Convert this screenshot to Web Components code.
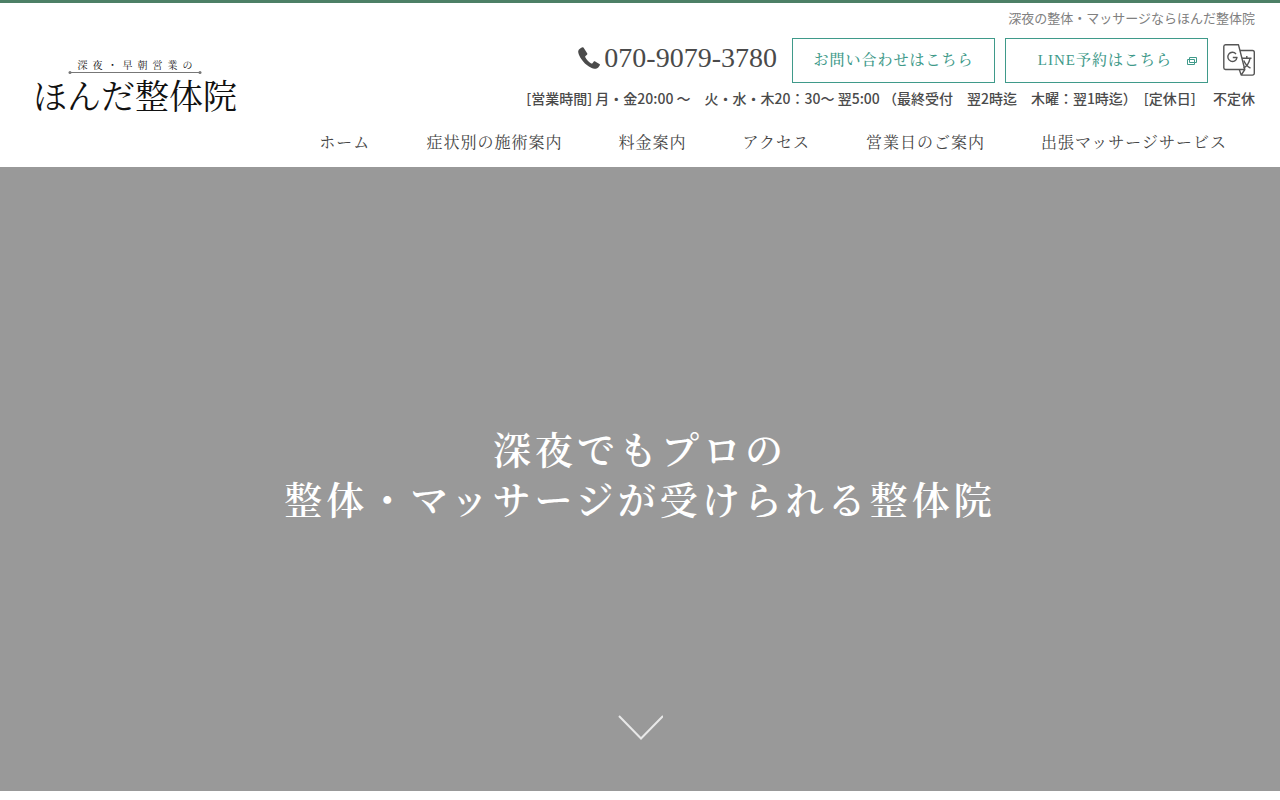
<!DOCTYPE html>
<html lang="ja">
<head>
  <meta charset="utf-8">
  <meta name="viewport" content="width=device-width, initial-scale=1">
  <title>ほんだ整体院</title>
  <style>
    body {
      --green: #4d8066;
      --teal: #3f9a8a;
      --serif: "Liberation Serif", "Noto Serif CJK JP", "Noto Sans CJK JP", serif;
      margin: 0;
      background: #fff;
      color: #4a4a4a;
      font-family: "Noto Sans CJK JP", sans-serif;
    }
  </style>
</head>
<body>
  <site-header>
    <site-logo slot="logo">
      <span slot="lead">深夜・早朝営業の</span>
      ほんだ整体院
    </site-logo>
    <span slot="tagline">深夜の整体・マッサージならほんだ整体院</span>
    <tel-link slot="contact" number="070-9079-3780"></tel-link>
    <outline-button slot="contact" href="#contact">お問い合わせはこちら</outline-button>
    <outline-button slot="contact" href="#line" external>LINE予約はこちら</outline-button>
    <translate-button slot="contact"></translate-button>
    <span slot="hours">[営業時間] 月・金20:00 ～　火・水・木20：30～ 翌5:00 （最終受付　翌2時迄　木曜：翌1時迄）　[定休日]　 不定休</span>
    <nav-item slot="nav" href="#home">ホーム</nav-item>
    <nav-item slot="nav" href="#symptoms">症状別の施術案内</nav-item>
    <nav-item slot="nav" href="#price">料金案内</nav-item>
    <nav-item slot="nav" href="#access">アクセス</nav-item>
    <nav-item slot="nav" href="#calendar">営業日のご案内</nav-item>
    <nav-item slot="nav" href="#visit">出張マッサージサービス</nav-item>
  </site-header>
  <hero-banner>深夜でもプロの<br>整体・マッサージが受けられる整体院</hero-banner>

  <script>
    class SiteHeader extends HTMLElement {
      constructor() {
        super();
        this.attachShadow({ mode: 'open' }).innerHTML = `
          <style>
            :host {
              display: block;
              border-top: 3px solid var(--green);
            }
            header {
              display: flex;
              justify-content: space-between;
              padding: 5px 25px 7px 33px;
            }
            .logo {
              padding-top: 52px;
            }
            .info {
              display: flex;
              flex-direction: column;
              align-items: flex-end;
            }
            .tagline {
              margin: 0;
              color: #808080;
              font-size: 13px;
              line-height: 20px;
            }
            .contact {
              display: flex;
              gap: 10px;
              margin-top: 10px;
            }
            .hours {
              margin: 5px 0 0;
              font-size: 14px;
              font-weight: 500;
              line-height: 20px;
              white-space: nowrap;
            }
            nav {
              display: flex;
              margin-top: 18px;
            }
          </style>
          <header>
            <div class="logo"><slot name="logo"></slot></div>
            <div class="info">
              <p class="tagline"><slot name="tagline"></slot></p>
              <div class="contact"><slot name="contact"></slot></div>
              <p class="hours"><slot name="hours"></slot></p>
              <nav><slot name="nav"></slot></nav>
            </div>
          </header>
        `;
      }
    }

    class SiteLogo extends HTMLElement {
      constructor() {
        super();
        this.attachShadow({ mode: 'open' }).innerHTML = `
          <style>
            :host {
              display: block;
              font-family: var(--serif);
              color: #111;
            }
            a {
              display: flex;
              flex-direction: column;
              align-items: center;
              color: inherit;
              text-decoration: none;
            }
            .lead {
              padding-left: 5px;
              font-size: 10px;
              line-height: 11px;
              letter-spacing: 5px;
            }
            .name {
              font-size: 34px;
              font-weight: 400;
              line-height: 46px;
              white-space: nowrap;
            }
            svg {
              display: block;
            }
          </style>
          <a href="#home">
            <span class="lead"><slot name="lead"></slot></span>
            <svg width="134" height="4" viewBox="0 0 134 4" fill="#777" aria-hidden="true">
              <path d="M2 1h130v1H2z"/>
              <circle cx="2" cy="1.5" r="1.5"/>
              <circle cx="132" cy="1.5" r="1.5"/>
            </svg>
            <span class="name"><slot></slot></span>
          </a>
        `;
      }
    }

    class TelLink extends HTMLElement {
      constructor() {
        super();
        const number = this.getAttribute('number');
        this.attachShadow({ mode: 'open' }).innerHTML = `
          <style>
            :host {
              display: block;
              margin-right: 5px;
            }
            a {
              display: flex;
              align-items: center;
              gap: 4px;
              color: #4a4a4a;
              font-family: var(--serif);
              font-size: 28px;
              line-height: 40px;
              text-decoration: none;
            }
          </style>
          <a href="tel:${number}">
            <svg width="22" height="22" viewBox="0 0 22 22" fill="currentColor" aria-hidden="true">
              <path d="M4.6.3C3 .8.4 2.3.2 4.2c-.3 3.200 3.200 9 6.700 12.200 3.500 3.200 8.200 5.700 11 5.400 1.800-.2 3.200-2.100 3.900-3.500.3-.6.100-1-.4-1.300l-4.200-2.600c-.5-.3-1-.2-1.400.2l-1.300 1.600c-.4.400-.8.500-1.300.2-2.400-1.300-4.700-3.700-5.900-6.200-.2-.4-.1-.8.200-1.100l1.500-1.400c.4-.4.5-.8.300-1.300L5.800.9C5.600.4 5.100.1 4.600.3z"/>
            </svg>
            <span>${number}</span>
          </a>
        `;
      }
    }

    class OutlineButton extends HTMLElement {
      constructor() {
        super();
        const icon = this.hasAttribute('external') ? `
          <svg width="10" height="8" viewBox="0 0 10 8" fill="none" stroke="currentColor" aria-hidden="true">
            <path d="M2.5.5h7v5h-7zM2.5 2.5h-2v5h7v-2"/>
            <path d="M7.5 2.5v3M2.5 2.5h5"/>
          </svg>` : '';
        this.attachShadow({ mode: 'open' }).innerHTML = `
          <style>
            :host {
              display: block;
            }
            a {
              display: flex;
              align-items: center;
              justify-content: center;
              box-sizing: border-box;
              width: 203px;
              height: 45px;
              padding-bottom: 4px;
              border: 1px solid var(--teal);
              color: var(--teal);
              font-family: var(--serif);
              font-size: 15px;
              font-weight: 500;
              letter-spacing: 1px;
              text-decoration: none;
            }
            :host([external]) a {
              justify-content: flex-end;
              gap: 15px;
              padding-right: 10px;
            }
            svg {
              margin-top: 4px;
            }
          </style>
          <a href="${this.getAttribute('href')}"><slot></slot>${icon}</a>
        `;
      }
    }

    class TranslateButton extends HTMLElement {
      constructor() {
        super();
        this.attachShadow({ mode: 'open' }).innerHTML = `
          <style>
            :host {
              display: block;
              margin: 6px 0 0 5px;
            }
            button {
              display: block;
              padding: 0;
              border: 0;
              background: none;
              cursor: pointer;
            }
            svg {
              display: block;
            }
          </style>
          <button type="button" aria-label="Translate">
            <svg width="32" height="32" viewBox="0 0 32 32" fill="none" stroke="#555" stroke-width="1.4" stroke-linejoin="round" aria-hidden="true">
              <path d="M2.5.8h13l6.300 24.700H2.500A1.800 1.800 0 0 1 .8 23.700V2.500A1.800 1.800 0 0 1 2.500.8z"/>
              <path d="M17 6.500h12.500a1.800 1.800 0 0 1 1.800 1.800v21a1.800 1.800 0 0 1-1.800 1.800H18.200l-1.900-5.600M18.200 31.100l3.600-5.600"/>
              <path d="M13 10a4.600 4.600 0 1 0 1 3.500H9.800"/>
              <path d="M19 14.300h9.500M23.800 12v2.300M27 14.300c-.8 4.200-3 7.700-6.400 9.900M20.800 16.500c1.200 3.300 3.500 5.900 6.700 7.700"/>
            </svg>
          </button>
        `;
      }
    }

    class NavItem extends HTMLElement {
      constructor() {
        super();
        this.attachShadow({ mode: 'open' }).innerHTML = `
          <style>
            :host {
              display: block;
            }
            a {
              display: block;
              padding: 0 28px;
              color: #444;
              font-family: var(--serif);
              font-size: 16px;
              line-height: 34px;
              letter-spacing: 1px;
              text-decoration: none;
              white-space: nowrap;
            }
          </style>
          <a href="${this.getAttribute('href')}"><slot></slot></a>
        `;
      }
    }

    class HeroBanner extends HTMLElement {
      constructor() {
        super();
        this.attachShadow({ mode: 'open' }).innerHTML = `
          <style>
            :host {
              display: grid;
              grid-template-rows: 1fr auto 1fr;
              justify-items: center;
              box-sizing: border-box;
              height: calc(100vh - 176px);
              padding-bottom: 6px;
              background: #999;
            }
            h1 {
              grid-row: 2;
              margin: 0;
              color: #fff;
              font-family: var(--serif);
              font-size: 38px;
              font-weight: 600;
              line-height: 50px;
              letter-spacing: 4px;
              text-align: center;
            }
            a {
              grid-row: 3;
              align-self: end;
              margin-bottom: 44px;
            }
            svg {
              display: block;
            }
          </style>
          <h1><slot></slot></h1>
          <a href="#contents" aria-label="スクロール">
            <svg width="46" height="26" viewBox="0 0 46 26" fill="none" stroke="#e8e8e8" stroke-width="2" aria-hidden="true">
              <path d="M2 1l22 22.500L46 1"/>
            </svg>
          </a>
        `;
      }
    }

    customElements.define('site-header', SiteHeader);
    customElements.define('site-logo', SiteLogo);
    customElements.define('tel-link', TelLink);
    customElements.define('outline-button', OutlineButton);
    customElements.define('translate-button', TranslateButton);
    customElements.define('nav-item', NavItem);
    customElements.define('hero-banner', HeroBanner);
  </script>
</body>
</html>
